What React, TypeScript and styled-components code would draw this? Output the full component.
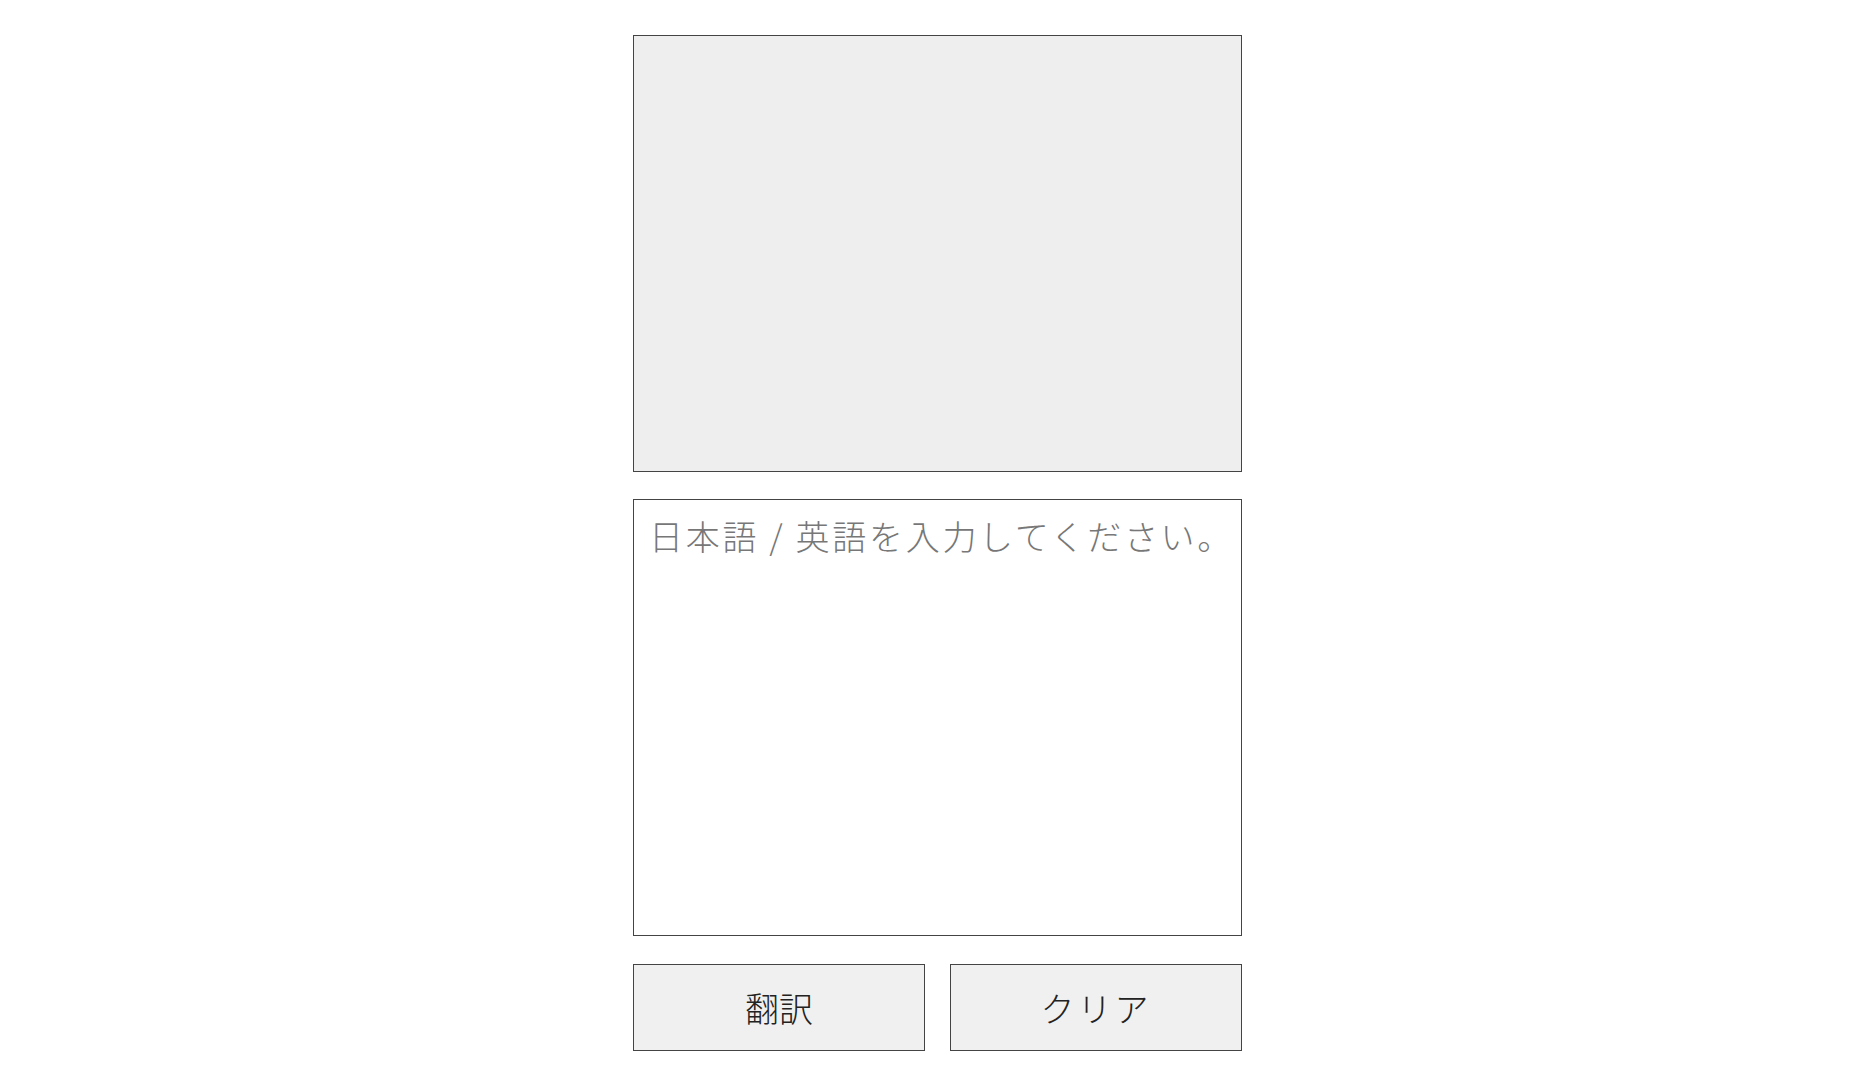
import React, {useState} from 'react'
import styled, {createGlobalStyle} from 'styled-components'

const GlobalStyle = createGlobalStyle`
  html, body {
    margin: 0;
    padding: 0;
    background: #ffffff;
  }
  body {
    font-family: "Noto Sans CJK JP", "Noto Sans", sans-serif;
  }
`

const Wrap = styled.div`
  display: flex;
  flex-direction: column;
  align-items: center;
  padding-top: 35px;
`
const Column = styled.div`
  display: flex;
  flex-direction: column;
  gap: 27px;
  width: 609px;
`
const Output = styled.div`
  box-sizing: border-box;
  height: 437px;
  background: #eeeeee;
  border: 1px solid #444444;
`
const Input = styled.textarea`
  box-sizing: border-box;
  display: block;
  width: 100%;
  height: 437px;
  margin: 0;
  padding: 11px 0 10px 15px;
  border: 1px solid #444444;
  border-radius: 0;
  outline: none;
  resize: none;
  overflow: hidden;
  background: #ffffff;
  font-family: "Noto Sans CJK JP", "Noto Sans", sans-serif;
  font-size: 34px;
  font-weight: 300;
  letter-spacing: 2.7px;
  color: #333333;

  &::placeholder {
    color: #777777;
  }
`
const ButtonRow = styled.div`
  display: grid;
  grid-template-columns: 1fr 1fr;
  gap: 25px;
  margin-top: 1px;
`
const Button = styled.button`
  box-sizing: border-box;
  height: 87px;
  margin: 0;
  padding: 0;
  border: 1px solid #444444;
  border-radius: 0;
  background: #f0f0f0;
  color: #222222;
  font-family: "Noto Sans CJK JP", "Noto Sans", sans-serif;
  font-size: 34px;
  font-weight: 300;
  letter-spacing: ${p => (p.$spaced ? '3px' : '0')};
  cursor: pointer;
`

export default function App() {
  const [text, setText] = useState('')

  return (
    <Wrap>
      <GlobalStyle />
      <Column>
        <Output />
        <Input
          value={text}
          onChange={e => setText(e.target.value)}
          placeholder="日本語 / 英語を入力してください。"
        />
        <ButtonRow>
          <Button>翻訳</Button>
          <Button $spaced onClick={() => setText('')}>
            クリア
          </Button>
        </ButtonRow>
      </Column>
    </Wrap>
  )
}
